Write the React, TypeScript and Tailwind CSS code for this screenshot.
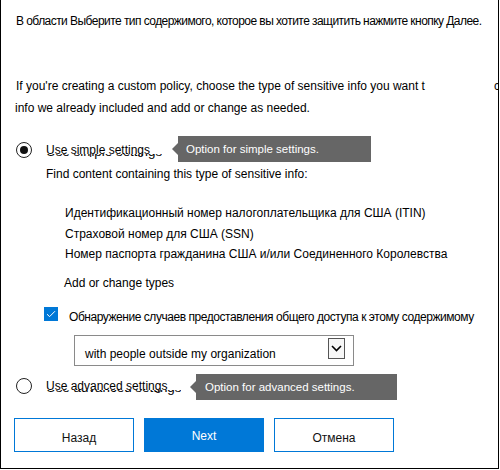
import React from 'react'

const font = { fontFamily: '"Liberation Sans", Arial, sans-serif' }

function Radio({ checked }: { checked?: boolean }) {
  return (
    <span className="flex h-4 w-4 shrink-0 items-center justify-center rounded-full border-[1.5px] border-[#222]">
      {checked && <span className="h-2 w-2 rounded-full bg-[#111]" />}
    </span>
  )
}

function Tip({ text, className }: { text: string; className: string }) {
  return (
    <div className={`absolute flex h-[26px] items-center bg-[#666666] text-[11.5px] text-white ${className}`}>
      <span className="absolute -left-[6px] top-[7px] h-0 w-0 border-y-[6px] border-r-[6px] border-y-transparent border-r-[#666666]" />
      {text}
    </div>
  )
}

// label with the half-hidden double drawn underneath, as in the capture
function OptionLabel({ text }: { text: string }) {
  return (
    <span className="relative leading-4">
      {text}
      <span className="absolute left-0 top-[12px] h-[5px] overflow-hidden">
        <span className="-mt-[10px] block whitespace-nowrap text-[13.4px] leading-4">{text}</span>
      </span>
    </span>
  )
}

export default function App() {
  return (
    <div className="relative h-[469px] w-[499px] overflow-hidden border-b border-l border-r border-black bg-white text-[12px] leading-4 text-black" style={font}>
      <div className="flex flex-col">
        <p className="ml-[15px] mt-[13px] h-4 whitespace-nowrap tracking-[-0.55px]">В области Выберите тип содержимого, которое вы хотите защитить нажмите кнопку Далее.</p>

        <div className="mt-[49px] flex h-4">
          <p className="ml-[15px] whitespace-nowrap">If you're creating a custom policy, choose the type of sensitive info you want t</p>
          <span className="ml-auto w-[4px] overflow-hidden">c</span>
        </div>
        <p className="ml-[14px] mt-[6px] h-4">info we already included and add or change as needed.</p>

        <div className="ml-[15px] mt-[25px] flex h-[17px] items-center gap-[14px]">
          <Radio checked />
          <OptionLabel text="Use simple settings" />
        </div>
        <p className="ml-[45px] mt-[8px] h-4">Find content containing this type of sensitive info:</p>

        <ul className="ml-[64px] mt-[23px] flex flex-col">
          <li className="h-4">Идентификационный номер налогоплательщика для США (ITIN)</li>
          <li className="mt-[5px] h-4">Страховой номер для США (SSN)</li>
          <li className="mt-[4px] h-4">Номер паспорта гражданина США и/или Соединенного Королевства</li>
        </ul>
        <p className="ml-[63px] mt-[13px] h-4">Add or change types</p>

        <div className="ml-[43px] mt-[16px] flex h-[18px] items-start gap-[11px]">
          <span className="flex h-[14px] w-[14px] shrink-0 items-center justify-center bg-[#0078d7]">
            <svg width="10" height="8" viewBox="0 0 10 8" fill="none">
              <path d="M1 4.2 3.6 6.6 9 1.2" stroke="white" strokeWidth="1" />
            </svg>
          </span>
          <span className="mt-[2px] whitespace-nowrap tracking-[-0.45px]">Обнаружение случаев предоставления общего доступа к этому содержимому</span>
        </div>

        <div className="ml-[73px] mt-[10px] flex h-[31px] w-[280px] items-start border border-[#8a8a8a]">
          <span className="ml-[10px] mt-[10px]">with people outside my organization</span>
          <span className="ml-auto mr-[8px] mt-[2px] flex h-[21px] w-[17px] items-center justify-center border border-[#555] bg-[#f7f7f7]">
            <svg width="11" height="7" viewBox="0 0 11 7" fill="none">
              <path d="M1 1 5.5 5.5 10 1" stroke="black" strokeWidth="1.6" />
            </svg>
          </span>
        </div>

        <div className="ml-[15px] mt-[11px] flex h-[17px] items-center gap-[14px]">
          <Radio />
          <OptionLabel text="Use advanced settings" />
        </div>

        <div className="ml-[13px] mt-[24px] flex gap-[10px]">
          <button className="flex h-[34px] w-[120px] items-center justify-center border border-[#0078d7] pl-[10px] pt-[6px] text-[#111]">Назад</button>
          <button className="flex h-[34px] w-[120px] items-center justify-center bg-[#0078d7] pt-[1px] text-white">Next</button>
          <button className="flex h-[34px] w-[120px] items-center justify-center border border-[#0078d7] pt-[6px] text-[#111]">Отмена</button>
        </div>
      </div>

      <Tip text="Option for simple settings." className="left-[177px] top-[136px] w-[193px] pl-[8px]" />
      <Tip text="Option for advanced settings." className="left-[195px] top-[374px] w-[201px] pl-[9px]" />
    </div>
  )
}
